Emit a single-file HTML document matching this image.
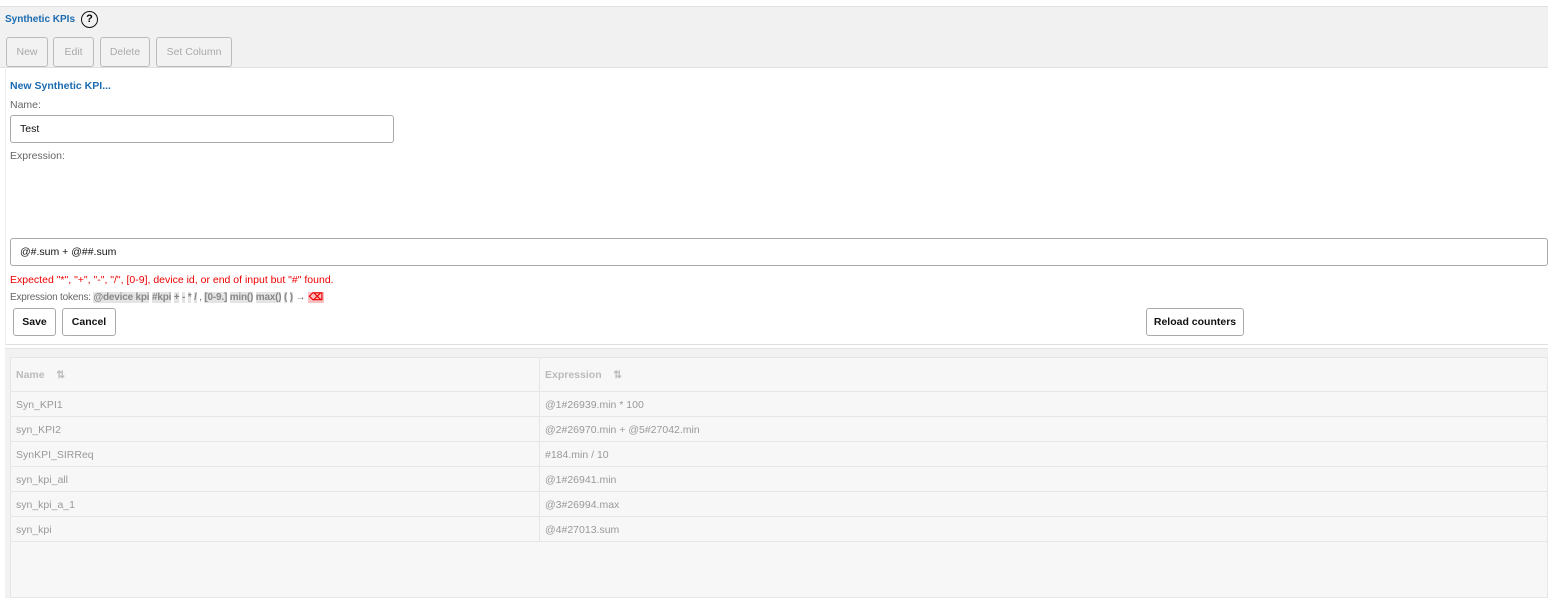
<!DOCTYPE html>
<html><head><meta charset="utf-8"><style>
*{box-sizing:border-box;margin:0;padding:0}
body{width:1548px;height:598px;background:#fff;font-family:"Liberation Sans",Arial,sans-serif;font-size:11px;position:relative;overflow:hidden}
.a{position:absolute}
.btn{position:absolute;border:1px solid #bbb;border-radius:3px;background:#f2f2f2;color:#aaa;font-size:10.5px;text-align:center;line-height:28px;height:30px}
.wb{position:absolute;border:1px solid #aaa;border-radius:3px;background:#fff;color:#111;font-size:10.5px;font-weight:bold;text-align:center;line-height:27px;height:28px}
.lbl{position:absolute;color:#666;font-size:10.5px}
.inp{position:absolute;border:1px solid #aaa;border-radius:3px;background:#fff;color:#111;font-size:10.5px;padding-left:9px;line-height:27px;height:28px}
.tk{background:#e4e4e4;font-weight:bold;color:#888}
.row{position:absolute;left:10px;width:1537px;height:25px;border-bottom:1px solid #e6e6e6;color:#999;font-size:10.5px;line-height:26px}
.row span{position:absolute}
</style></head><body>
<div class="a" style="left:0;top:6px;width:1548px;height:62px;background:#f1f1f1;border-top:1px solid #e0e0e0;border-bottom:1px solid #e0e0e0"></div>
<div class="a" style="left:5px;top:14px;color:#1a6bb0;font-size:10px;font-weight:bold;">Synthetic KPIs</div>
<div class="a" style="left:81px;top:11px;width:17px;height:17px;border:1.5px solid #111;border-radius:50%;font-size:11px;font-weight:bold;text-align:center;line-height:14px">?</div>
<div class="btn" style="left:6px;top:37px;width:42px;line-height:29px">New</div>
<div class="btn" style="left:53px;top:37px;width:41px;line-height:29px">Edit</div>
<div class="btn" style="left:100px;top:37px;width:50px;line-height:29px">Delete</div>
<div class="btn" style="left:156px;top:37px;width:76px;line-height:29px">Set Column</div>
<div class="a" style="left:5px;top:69px;width:1543px;height:276px;background:#fff;border-bottom:1px solid #e0e0e0;border-left:1px solid #eee"></div>
<div class="a" style="left:10px;top:80px;color:#1a6bb0;font-size:10.5px;font-weight:bold">New Synthetic KPI...</div>
<div class="lbl" style="left:10px;top:99px">Name:</div>
<div class="inp" style="left:10px;top:115px;width:384px">Test</div>
<div class="lbl" style="left:10px;top:150px">Expression:</div>
<div class="inp" style="left:10px;top:238px;width:1538px">@#.sum + @##.sum</div>
<div class="a" style="left:10px;top:274px;color:#e00;font-size:10.5px">Expected "*", "+", "-", "/", [0-9], device id, or end of input but "#" found.</div>
<div class="a" style="left:10px;top:292px;color:#666;font-size:10px;white-space:nowrap;letter-spacing:-0.2px">Expression tokens: <span class="tk">@device kpi</span> <span class="tk">#kpi</span> <span class="tk">+</span> <span class="tk">-</span> <span class="tk">*</span> <span class="tk">/</span> , <span class="tk">[0-9.]</span> <span class="tk">min()</span> <span class="tk">max()</span> <span class="tk">(</span> <span class="tk">)</span> → <span style="background:#f8c0c0;color:#e00;font-weight:bold;padding:0 1px">⌫</span></div>
<div class="wb" style="left:13px;top:308px;width:43px">Save</div>
<div class="wb" style="left:62px;top:308px;width:54px">Cancel</div>
<div class="wb" style="left:1146px;top:308px;width:98px">Reload counters</div>
<div class="a" style="left:5px;top:348px;width:1543px;height:250px;background:#f2f2f2;border-top:1px solid #e4e4e4"></div>
<div class="a" style="left:10px;top:357px;width:1538px;height:241px;background:#f7f7f7;border:1px solid #e6e6e6"></div>
<div class="a" style="left:539px;top:357px;width:1px;height:184px;background:#e6e6e6"></div>
<div class="row" style="top:357px;height:35px;line-height:37px;color:#bbb;font-weight:bold"><span style="left:6px">Name &nbsp;&nbsp; ⇅</span><span style="left:535px">Expression &nbsp;&nbsp; ⇅</span></div>
<div class="row" style="top:392px"><span style="left:6px">Syn_KPI1</span><span style="left:535px">@1#26939.min * 100</span></div>
<div class="row" style="top:417px"><span style="left:6px">syn_KPI2</span><span style="left:535px">@2#26970.min + @5#27042.min</span></div>
<div class="row" style="top:442px"><span style="left:6px">SynKPI_SIRReq</span><span style="left:535px">#184.min / 10</span></div>
<div class="row" style="top:467px"><span style="left:6px">syn_kpi_all</span><span style="left:535px">@1#26941.min</span></div>
<div class="row" style="top:492px"><span style="left:6px">syn_kpi_a_1</span><span style="left:535px">@3#26994.max</span></div>
<div class="row" style="top:517px"><span style="left:6px">syn_kpi</span><span style="left:535px">@4#27013.sum</span></div>
</body></html>
